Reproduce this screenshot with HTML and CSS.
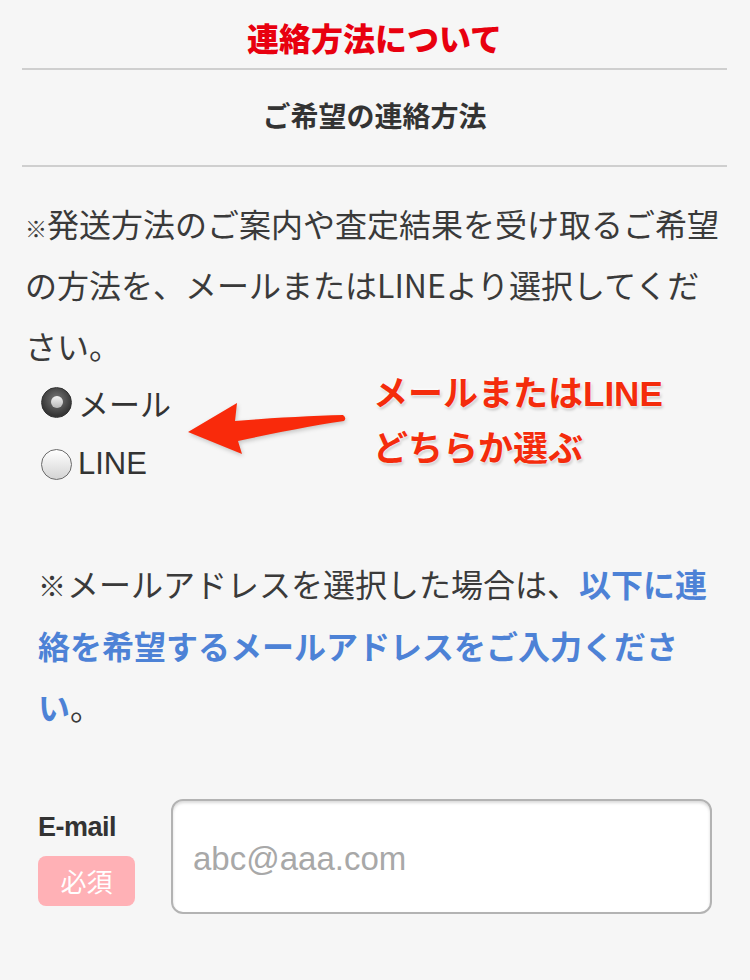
FILE: index.html
```html
<!DOCTYPE html>
<html lang="ja">
<head>
  <meta charset="UTF-8" />
  <title>連絡方法について</title>
  <meta name="viewport" content="width=device-width, initial-scale=1.0"/>
  <link rel="stylesheet" href="styles.css">
</head>
<body>

  <div class="page">
    <h1 class="title">連絡方法について</h1>
    <h2 class="subtitle">ご希望の連絡方法</h2>

    <p class="lead"><span class="kome">※</span>発送方法のご案内や査定結果を受け取るご希望の方法を、メールまたはLINEより選択してくだ<br>さい。</p>

    <!-- Choice + annotation -->
    <div class="choice">
      <label class="radio"><input type="radio" name="contact" checked>メール</label>
      <label class="radio"><input type="radio" name="contact">LINE</label>

      <svg class="arrow" width="170" height="70" viewBox="0 0 170 70">
        <path d="M8 38 L57 9 L55 27 C90 24 130 22 163 21 Q167 24 164 27 C130 32 90 40 58 47 L62 60 Z" />
      </svg>
      <p class="note">メールまたはLINE<br>どちらか選ぶ</p>
    </div>

    <p class="notice"><span class="kome">※</span>メールアドレスを選択した場合は、<strong>以下に連絡を希望するメールアドレスをご入力ください</strong>。</p>

    <div class="field">
      <div class="field-label">
        <span class="field-name">E-mail</span>
        <span class="required">必須</span>
      </div>
      <input class="field-input" type="email" placeholder="abc@aaa.com">
    </div>
  </div>

</body>
</html>
```

FILE: styles.css
```css
* {
  box-sizing: border-box;
}

body {
  margin: 0;
  background-color: #f6f6f6;
  color: #333;
  font-family: "Noto Sans CJK JP", sans-serif;
}

.page {
  padding: 0 23px 0 22px;
}

/* HEADINGS */
.title {
  margin: 0;
  padding-top: 6px;
  line-height: 62px;
  font-size: 32px;
  font-weight: 900;
  color: #e8000f;
  text-align: center;
  border-bottom: 2px solid #cfcfcf;
}

.subtitle {
  margin: 0;
  padding: 25px 0 30px;
  line-height: 40px;
  font-size: 28px;
  font-weight: 700;
  color: #333;
  text-align: center;
  border-bottom: 2px solid #cfcfcf;
}

/* TEXT */
.lead {
  margin: 26px 0 0;
  padding-left: 3px;
  font-size: 32px;
  line-height: 61px;
  color: #3a3a3a;
}

.kome {
  line-height: 1;
}

.lead .kome {
  font-size: 22px;
}

.notice {
  margin: 61px 0 0;
  padding-left: 16px;
  font-size: 32px;
  line-height: 61.5px;
  color: #3a3a3a;
}

.notice .kome {
  font-size: 28px;
  margin-right: 1px;
}

.notice strong {
  color: #4d82d6;
  font-weight: 700;
}

/* RADIO CHOICE */
.choice {
  position: relative;
  margin-top: -2px;
  display: flex;
  flex-direction: column;
  gap: 6px;
}

.radio {
  display: flex;
  align-items: center;
  gap: 6px;
  height: 56px;
  padding-left: 19px;
  font-family: "Liberation Sans", "Noto Sans CJK JP", sans-serif;
  font-size: 31px;
  color: #333;
}

.radio input {
  appearance: none;
  -webkit-appearance: none;
  margin: 0;
  width: 31px;
  height: 31px;
  border-radius: 50%;
  border: 1.5px solid #6a6a6a;
  background: linear-gradient(to bottom, #ffffff, #d4d4d4);
  position: relative;
}

.radio input:checked {
  border-color: #333;
  background: radial-gradient(circle at 50% 40%, #7a7a7a, #353535 70%);
}

.radio input:checked::after {
  content: "";
  position: absolute;
  left: 50%;
  top: 50%;
  width: 12px;
  height: 12px;
  margin: -6px 0 0 -6px;
  border-radius: 50%;
  background: linear-gradient(to bottom, #f4f4f4, #b8b8b8);
}

.arrow {
  position: absolute;
  left: 158px;
  top: 20px;
  filter: drop-shadow(1px 2px 2px rgba(0, 0, 0, 0.2));
}

.arrow path {
  fill: #f92a0b;
}

.note {
  position: absolute;
  left: 351px;
  top: -8px;
  margin: 0;
  font-family: "Liberation Sans", "Noto Sans CJK JP", sans-serif;
  font-size: 35px;
  font-weight: 700;
  line-height: 55px;
  color: #f42c0c;
  text-shadow: 0 0 3px #fff, 0 0 3px #fff, 1px 2px 3px rgba(0, 0, 0, 0.25);
}

/* EMAIL FIELD */
.field {
  display: flex;
  align-items: flex-start;
  margin: 61px 15px 0 16px;
}

.field-label {
  width: 133px;
  padding-top: 13px;
  display: flex;
  flex-direction: column;
  align-items: flex-start;
  gap: 14px;
}

.field-name {
  font-family: "Liberation Sans", sans-serif;
  font-size: 27px;
  font-weight: 700;
  line-height: 30px;
  letter-spacing: -0.5px;
  color: #333;
}

.required {
  width: 97px;
  height: 50px;
  line-height: 50px;
  text-align: center;
  border-radius: 8px;
  background-color: #ffb1b6;
  color: #fff;
  font-size: 26px;
}

.field-input {
  flex: 1;
  height: 115px;
  border: 2px solid #b3b3b3;
  border-radius: 12px;
  background-color: #fff;
  box-shadow: inset 0 2px 3px rgba(0, 0, 0, 0.15);
  padding: 5px 20px 0;
  font-family: "Liberation Sans", sans-serif;
  font-size: 33px;
  color: #333;
}

.field-input::placeholder {
  color: #a8a8a8;
}
```
